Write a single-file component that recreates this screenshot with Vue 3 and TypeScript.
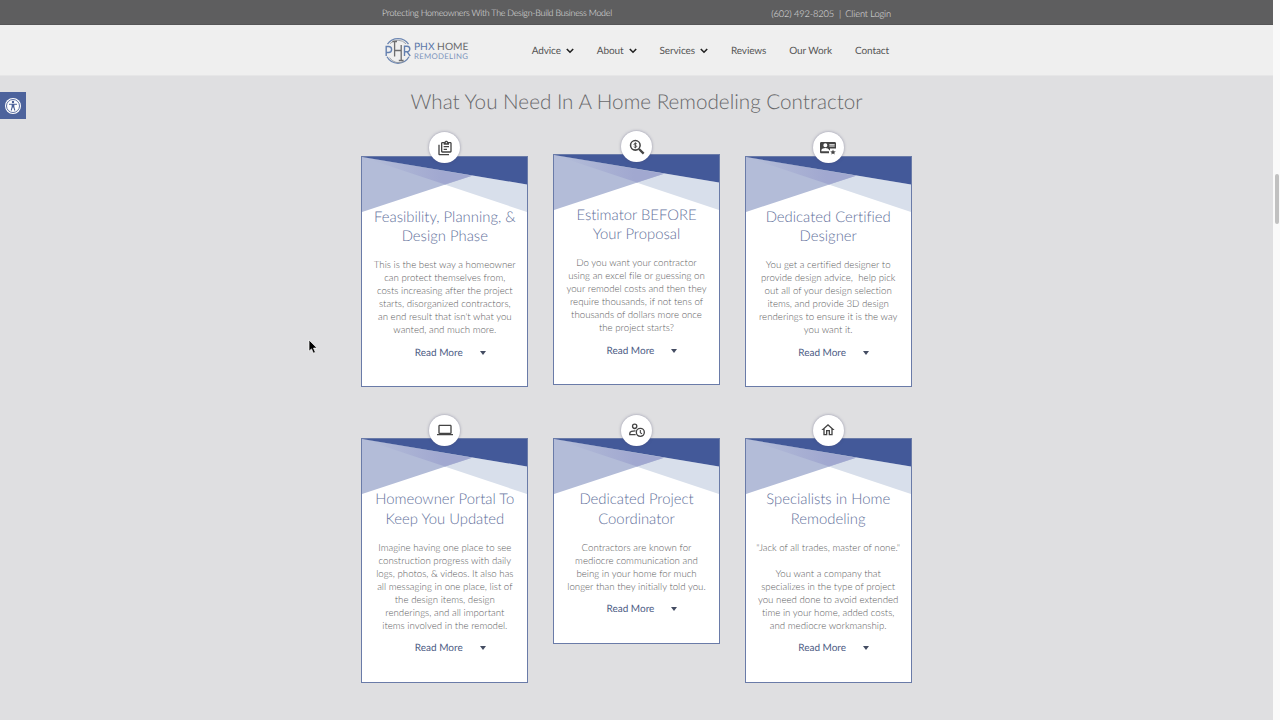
<script setup lang="ts">
interface NavItem { label: string; menu: boolean }
interface Card { icon: string; title: string[]; body: string[]; raised?: boolean }

const nav: NavItem[] = [
  { label: 'Advice', menu: true },
  { label: 'About', menu: true },
  { label: 'Services', menu: true },
  { label: 'Reviews', menu: false },
  { label: 'Our Work', menu: false },
  { label: 'Contact', menu: false },
]

const cards: Card[] = [
  {
    icon: 'plan',
    title: ['Feasibility, Planning, &', 'Design Phase'],
    body: ['This is the best way a homeowner', 'can protect themselves from,', 'costs increasing after the project', 'starts, disorganized contractors,', "an end result that isn't what you", 'wanted, and much more.'],
  },
  {
    icon: 'estimate',
    raised: true,
    title: ['Estimator BEFORE', 'Your Proposal'],
    body: ['Do you want your contractor', 'using an excel file or guessing on', 'your remodel costs and then they', 'require thousands, if not tens of', 'thousands of dollars more once', 'the project starts?'],
  },
  {
    icon: 'designer',
    title: ['Dedicated Certified', 'Designer'],
    body: ['You get a certified designer to', 'provide design advice,\u00a0 help pick', 'out all of your design selection', 'items, and provide 3D design', 'renderings to ensure it is the way', 'you want it.'],
  },
  {
    icon: 'portal',
    title: ['Homeowner Portal To', 'Keep You Updated'],
    body: ['Imagine having one place to see', 'construction progress with daily', 'logs, photos, & videos. It also has', 'all messaging in one place, list of', 'the design items, design', 'renderings, and all important', 'items involved in the remodel.'],
  },
  {
    icon: 'coordinator',
    title: ['Dedicated Project', 'Coordinator'],
    body: ['Contractors are known for', 'mediocre communication and', 'being in your home for much', 'longer than they initially told you.'],
  },
  {
    icon: 'home',
    title: ['Specialists in Home', 'Remodeling'],
    body: ['"Jack of all trades, master of none."', '\u00a0', 'You want a company that', 'specializes in the type of project', 'you need done to avoid extended', 'time in your home, added costs,', 'and mediocre workmanship.'],
  },
]
</script>

<template>
  <div class="screen">
    <div class="page">
      <div class="topbar">
        <div class="wrap top-inner">
          <span class="tagline">Protecting Homeowners With The Design-Build Business Model</span>
          <span class="contact"><span>(602) 492-8205</span><span class="bar">|</span><span>Client Login</span></span>
        </div>
      </div>
      <header class="header">
        <div class="wrap head-inner">
          <div class="logo">
            <svg class="emblem" width="28" height="30" viewBox="0 0 28 30" fill="none">
              <path d="M3.5 8.2A12.6 12.6 0 0 1 24.5 8.2" stroke="#6d87b2" stroke-width="1.3" />
              <path d="M6 7.6A11 11 0 0 1 22 7.8" stroke="#8d9299" stroke-width=".8" />
              <path d="M3 20.8A12.6 12.6 0 0 0 25 20.8" stroke="#6d87b2" stroke-width="1.3" />
              <path d="M5.5 21.6A11 11 0 0 0 20 25.4" stroke="#8d9299" stroke-width=".8" />
              <path d="M2.2 20V10.5H4.6A3 3 0 0 1 4.6 16.5H2.2" stroke="#6480b0" stroke-width="1.4" />
              <path d="M10.6 5.5V20.5M17.2 9V24.5M10.6 14.5H17.2M8.4 5.5H13M14.8 24.5H19.6" stroke="#6c6c6e" stroke-width="1.3" />
              <path d="M20.5 20V10.2H23A2.7 2.7 0 0 1 23 15.8H20.5M23.2 15.8L26.2 20" stroke="#6480b0" stroke-width="1.4" />
            </svg>
            <div class="wordmark">
              <div class="word1"><b>PHX</b> HOME</div>
              <div class="word2">REMODELING</div>
            </div>
          </div>
          <nav class="nav">
            <a v-for="n in nav" :key="n.label" class="nav-item">
              {{ n.label }}
              <svg v-if="n.menu" class="chev" width="8" height="6" viewBox="0 0 8 6" fill="none" stroke="#222" stroke-width="1.6"><path d="M.8 1L4 4.2L7.2 1" /></svg>
            </a>
          </nav>
        </div>
      </header>
      <main>
        <h1>What You Need In A Home Remodeling Contractor</h1>
        <div class="grid">
          <article v-for="c in cards" :key="c.icon" class="card" :class="{ raised: c.raised }">
            <svg class="banner" viewBox="0 0 165 56" preserveAspectRatio="none">
              <defs>
                <linearGradient :id="'fade-' + c.icon" gradientUnits="userSpaceOnUse" x1="10" y1="0" x2="80" y2="0">
                  <stop offset="0" stop-color="#b3bcd8" />
                  <stop offset="1" stop-color="#a1a8d0" />
                </linearGradient>
              </defs>
              <path d="M0 0L165 28V56Z" fill="#d8dfeb" />
              <path d="M0 0V56L110 19Z" fill="#b3bcd8" />
              <path d="M0 0L83 28L110 19Z" :fill="'url(#fade-' + c.icon + ')'" />
              <path d="M0 0H165V28Z" fill="#435999" />
            </svg>
            <div class="badge">
              <svg class="icon" width="16" height="16" viewBox="0 0 24 24" fill="#444">
                <path v-if="c.icon === 'plan'" d="M4 7V21H18V23H4C2.9 23 2 22.1 2 21V7H4M20 3C21.1 3 22 3.9 22 5V17C22 18.1 21.1 19 20 19H8C6.9 19 6 18.1 6 17V5C6 3.9 6.9 3 8 3H11.18C11.6 1.84 12.7 1 14 1C15.3 1 16.4 1.84 16.82 3H20M14 3C13.45 3 13 3.45 13 4C13 4.55 13.45 5 14 5C14.55 5 15 4.55 15 4C15 3.45 14.55 3 14 3M10 7V5H8V17H20V5H18V7M15 15H10V13H15M18 11H10V9H18V11Z" />
                <g v-else-if="c.icon === 'estimate'" fill="none" stroke="#444">
                  <circle cx="9.5" cy="9.5" r="7.2" stroke-width="2.3" />
                  <path d="M15 15L22 22" stroke-width="3.4" />
                  <path d="M11.8 7.4C11 6.2 7.5 6.2 7.5 8C7.5 9.8 11.6 9.2 11.6 11.2C11.6 12.9 8 12.8 7.2 11.6M9.6 5V14" stroke-width="1.4" />
                </g>
                <g v-else-if="c.icon === 'designer'">
                  <path fill-rule="evenodd" d="M2 3H22C23.1 3 24 3.9 24 5V12.8H15V15.5H13.8C13.4 13.2 10 12 8 12C6 12 2 13 2 15.8V17H13.5V20H2C.9 20 0 19.1 0 18V5C0 3.9 .9 3 2 3ZM14 6V7.3H22V6ZM14 8.4V9.6H22V8.4ZM8 5A3 3 0 1 0 8 11A3 3 0 0 0 8 5Z" />
                  <path d="M19.5 14.2L20.6 16.8L23.6 17.1L21.4 19L22 21.9L19.5 20.4L17 21.9L17.6 19L15.4 17.1L18.4 16.8Z" />
                </g>
                <path v-else-if="c.icon === 'portal'" d="M4 6H20V16H4M20 18A2 2 0 0 0 22 16V6C22 4.89 21.1 4 20 4H4C2.89 4 2 4.89 2 6V16A2 2 0 0 0 4 18H0V20H24V18H20Z" />
                <g v-else-if="c.icon === 'coordinator'" fill="none" stroke="#444" stroke-width="2">
                  <circle cx="8.5" cy="6.5" r="3.2" />
                  <path d="M10 19H1.2V17C1.2 14.5 5 13.2 9.8 13.3" />
                  <circle cx="17" cy="15.5" r="6" />
                  <path d="M17 12V16L19.5 17.8" stroke-width="1.6" />
                </g>
                <path v-else d="M12 5.69L17 10.19V18H15V12H9V18H7V10.19L12 5.69M12 3L2 12H5V20H11V14H13V20H19V12H22" />
              </svg>
            </div>
            <h2><span v-for="t in c.title" :key="t">{{ t }}</span></h2>
            <p><span v-for="b in c.body" :key="b">{{ b }}</span></p>
            <div class="more"><span>Read More</span><i class="caret"></i></div>
          </article>
        </div>
      </main>
      <div class="access">
        <svg width="18" height="18" viewBox="0 0 18 18" fill="none">
          <circle cx="9" cy="9" r="8" fill="#fff" />
          <circle cx="9" cy="9" r="6.5" stroke="#4a5f97" stroke-width=".9" />
          <circle cx="9" cy="5" r="1.2" fill="#4a5f97" />
          <path d="M5 7.2H13M9 7V10.5M8.2 7.5V10L7.2 13.5M9.8 7.5V10L10.8 13.5" stroke="#4a5f97" stroke-width="1.1" />
        </svg>
      </div>
      <svg class="cursor" width="10" height="16" viewBox="0 0 10 16"><path d="M1 1V12.2L3.5 9.9L5.4 14.2L7.4 13.3L5.5 9.1H9Z" fill="#000" stroke="#fff" stroke-width=".7" /></svg>
    </div>
    <div class="scroll"><div class="thumb"></div></div>
  </div>
</template>

<style>
html, body { margin: 0; overflow: hidden; }
</style>

<style scoped>
.screen { display: flex; width: 1280px; height: 720px; overflow: hidden; font-family: Lato, "Liberation Sans", sans-serif; text-rendering: geometricPrecision; font-variant-ligatures: none; }
.page { position: relative; width: 1273px; height: 720px; background: #dfdfe1; }
.wrap { width: 509px; margin: 0 auto; }
.topbar { height: 25px; background: #5e5e5f; color: #e4e4e4; box-sizing: border-box; border-bottom: 1px solid #565657; }
.top-inner { display: flex; justify-content: space-between; align-items: center; height: 25px; }
.tagline { font-size: 8.9px; letter-spacing: -.25px; font-weight: 300; white-space: nowrap; }
.contact { display: flex; font-size: 9.3px; letter-spacing: -.13px; font-weight: 300; white-space: nowrap; padding-top: 1px; }
.bar { margin: 0 4px 0 5px; }
.header { height: 51px; background: #efefef; border-bottom: 1px solid #e6e6e7; box-sizing: border-box; }
.head-inner { display: flex; justify-content: space-between; height: 51px; align-items: center; }
.logo { display: flex; align-items: center; gap: 2px; padding-left: 2px; }
.emblem { display: block; }
.wordmark { white-space: nowrap; line-height: 10px; padding-top: 1px; }
.word1 { font-size: 10.2px; color: #6a6b6d; }
.word1 b { font-weight: 400; color: #5b78aa; }
.word2 { font-size: 7.8px; color: #7c93bb; letter-spacing: .3px; line-height: 8px; }
.nav { display: flex; gap: 23px; padding: 1px 2px 0 0; }
.nav-item { display: flex; align-items: center; gap: 5px; font-size: 10px; letter-spacing: -.1px; color: #555; white-space: nowrap; }
.chev { display: block; }
main { display: flex; flex-direction: column; align-items: center; }
h1 { margin: 12px 0 0; height: 28px; line-height: 28px; font-size: 20.67px; font-weight: 300; color: #68686a; white-space: nowrap; }
.grid { display: grid; grid-template-columns: repeat(3, 167px); column-gap: 24.7px; row-gap: 51px; align-items: start; padding-top: 39.5px; }
.card { position: relative; box-sizing: border-box; border: 1px solid #6a7ba8; background: #fff; padding: 51px 0 0; text-align: center; }
.raised { top: -2px; }
.banner { position: absolute; left: 0; top: 0; width: 165px; height: 55px; }
.badge { position: absolute; left: 67px; top: -24.5px; width: 31px; height: 31px; border-radius: 50%; background: #fff; display: flex; align-items: center; justify-content: center; box-shadow: 0 0 3px rgba(70, 70, 110, .5); }
.raised .badge { top: -23.5px; }
.icon { display: block; }
h2 { position: relative; margin: 0; font-size: 14.85px; line-height: 19.5px; font-weight: 300; color: #64729c; }
h2 span, p span { display: block; white-space: nowrap; }
p { margin: 12.5px 0 0; font-size: 9.7px; line-height: 13px; font-weight: 300; color: #5c5c5e; }
.more { display: flex; align-items: center; height: 14px; margin-top: 8.5px; padding: 0 0 26.5px 52.5px; font-size: 10px; color: #4c5b84; white-space: nowrap; }
.caret { width: 0; height: 0; margin-left: 17px; border: 3.5px solid transparent; border-bottom: 0; border-top: 4px solid #444c62; }
.access { position: absolute; left: 0; top: 92px; width: 26px; height: 27px; background: #4d639c; display: flex; align-items: center; justify-content: center; }
.cursor { position: absolute; left: 308px; top: 339px; }
.scroll { width: 7px; background: #fafafa; padding-top: 174px; box-sizing: border-box; }
.thumb { width: 4px; height: 50px; margin-left: 2px; border-radius: 2px; background: #c1c1c1; }
</style>
